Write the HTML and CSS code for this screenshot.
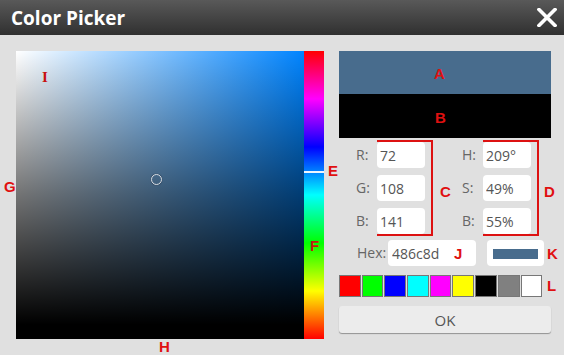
FILE: index.html
```html
<!DOCTYPE html>
<html>
<head>
    <link rel="stylesheet" href="styles.css">
</head>
<body>
    <div class="titlebar">
        <span class="title">Color Picker</span>
        <svg class="close" width="20" height="19" viewBox="0 0 20 19">
            <path d="M2 1.5 L18 17.5 M18 1.5 L2 17.5" stroke="#fff" stroke-width="3.6" stroke-linecap="square"/>
        </svg>
    </div>

    <div class="picker">
        <div class="sv">
            <div class="sv-marker"></div>
        </div>
        <div class="hue">
            <div class="hue-marker"></div>
        </div>

        <div class="side">
            <div class="preview-new"></div>
            <div class="preview-old"></div>

            <div class="fields">
                <div class="group">
                    <div class="labels">
                        <span>R:</span>
                        <span>G:</span>
                        <span>B:</span>
                    </div>
                    <div class="inputs">
                        <input type="text" value="72">
                        <input type="text" value="108">
                        <input type="text" value="141">
                    </div>
                </div>
                <div class="group group-hsb">
                    <div class="labels">
                        <span>H:</span>
                        <span>S:</span>
                        <span>B:</span>
                    </div>
                    <div class="inputs">
                        <input type="text" value="209°">
                        <input type="text" value="49%">
                        <input type="text" value="55%">
                    </div>
                </div>
            </div>

            <div class="hex-row">
                <label class="hex-label">Hex:</label>
                <input type="text" class="hex-input" value="486c8d">
                <div class="current">
                    <div class="current-swatch"></div>
                </div>
            </div>

            <div class="swatches">
                <div class="swatch" style="background:#ff0000"></div>
                <div class="swatch" style="background:#00ff00"></div>
                <div class="swatch" style="background:#0000ff"></div>
                <div class="swatch" style="background:#00ffff"></div>
                <div class="swatch" style="background:#ff00ff"></div>
                <div class="swatch" style="background:#ffff00"></div>
                <div class="swatch" style="background:#000000"></div>
                <div class="swatch" style="background:#808080"></div>
                <div class="swatch" style="background:#ffffff"></div>
            </div>

            <button class="ok">OK</button>
        </div>
    </div>

    <!-- annotation letters -->
    <span class="note note-i">I</span>
    <span class="note note-g">G</span>
    <span class="note note-h">H</span>
    <span class="note note-e">E</span>
    <span class="note note-f">F</span>
    <span class="note note-a">A</span>
    <span class="note note-b">B</span>
    <span class="note note-c">C</span>
    <span class="note note-d">D</span>
    <span class="note note-j">J</span>
    <span class="note note-k">K</span>
    <span class="note note-l">L</span>
</body>
</html>
```

FILE: styles.css
```css
body {
    margin: 0;
    background-color: #e0e0e0;
    font-family: "Open Sans", "Liberation Sans", sans-serif;
    width: 564px;
    height: 355px;
    overflow: hidden;
    position: relative;
}

.titlebar {
    height: 35px;
    background: linear-gradient(to bottom, #595959, #303030);
    display: flex;
    align-items: center;
    justify-content: space-between;
    padding: 0 7px 0 11px;
}

.title {
    color: #fff;
    font-weight: bold;
    font-size: 19px;
}

.close {
    display: block;
    margin-top: -1px;
}

.picker {
    display: flex;
    padding: 16px 0 0 16px;
}

.sv {
    width: 288px;
    height: 288px;
    position: relative;
    background:
        linear-gradient(to top, #000 5%, rgba(0, 0, 0, 0.55) 50%, rgba(0, 0, 0, 0) 100%),
        linear-gradient(to right, #fff, #0084ff);
}

.sv-marker {
    position: absolute;
    left: 135px;
    top: 123px;
    width: 9px;
    height: 9px;
    border: 1.5px solid #d8dde2;
    border-radius: 50%;
    box-shadow: 0 0 1px #223;
}

.hue {
    width: 20px;
    height: 288px;
    position: relative;
    background: linear-gradient(to bottom, #f00 0%, #f0f 16.66%, #00f 33.33%, #0ff 50%, #0f0 66.66%, #ff0 83.33%, #f00 100%);
}

.hue-marker {
    position: absolute;
    left: 0;
    right: 0;
    top: 120px;
    height: 2px;
    background-color: #eef6ff;
}

.side {
    margin-left: 15px;
    width: 212px;
}

.preview-new {
    height: 43px;
    background-color: #486c8d;
}

.preview-old {
    height: 44px;
    background-color: #000;
}

.fields {
    display: flex;
    margin-top: 2px;
    padding-left: 17px;
}

.group {
    display: flex;
}

.group-hsb {
    margin-left: 29px;
}

.labels {
    width: 21px;
    display: flex;
    flex-direction: column;
    gap: 7px;
    padding-top: 2px;
}

.labels span,
.hex-label {
    height: 26px;
    line-height: 26px;
    font-size: 14px;
    color: #666;
}

.inputs {
    display: flex;
    flex-direction: column;
    gap: 7px;
    border: 2px solid #d11;
    border-left: none;
    padding: 0 6px 0 0;
}

input[type="text"] {
    box-sizing: border-box;
    width: 48px;
    height: 26px;
    border: none;
    border-radius: 4px;
    padding: 0 3px;
    background-color: #fff;
    font-family: "Open Sans", "Liberation Sans", sans-serif;
    font-size: 14px;
    color: #555;
    outline: none;
}

.hex-row {
    display: flex;
    align-items: center;
    margin-top: 4px;
    padding-left: 18px;
}

.hex-label {
    width: 31px;
}

.hex-row .hex-input {
    width: 88px;
    padding-left: 4px;
}

.current {
    margin-left: 11px;
    width: 57px;
    height: 26px;
    background-color: #fff;
    border-radius: 4px;
    display: flex;
    align-items: center;
    justify-content: center;
}

.current-swatch {
    width: 45px;
    height: 10px;
    background-color: #486c8d;
    margin-top: 2px;
}

.swatches {
    display: flex;
    gap: 1px;
    margin-top: 9px;
}

.swatch {
    box-sizing: border-box;
    width: 21.7px;
    height: 22px;
    border: 1px solid #777;
}

.ok {
    display: block;
    margin-top: 9px;
    width: 212px;
    height: 27px;
    border: none;
    border-radius: 3px;
    background-color: #ececec;
    box-shadow: 0 1px 1px rgba(0, 0, 0, 0.35);
    font-family: "Open Sans", "Liberation Sans", sans-serif;
    font-size: 15px;
    color: #555;
}

.note {
    position: absolute;
    font-family: "Liberation Sans", Arial, sans-serif;
    font-weight: bold;
    font-size: 15px;
    line-height: 15px;
    color: #e01010;
}

.note-i { left: 42px; top: 70px; font-family: "Liberation Serif", serif; color: #c81010; }
.note-g { left: 4px; top: 179px; }
.note-h { left: 159px; top: 339px; }
.note-e { left: 328px; top: 163px; }
.note-f { left: 310px; top: 238px; color: #c42010; }
.note-a { left: 434px; top: 66px; }
.note-b { left: 435px; top: 110px; }
.note-c { left: 440px; top: 184px; }
.note-d { left: 544px; top: 184px; }
.note-j { left: 454px; top: 246px; }
.note-k { left: 547px; top: 246px; }
.note-l { left: 547px; top: 278px; }
```
